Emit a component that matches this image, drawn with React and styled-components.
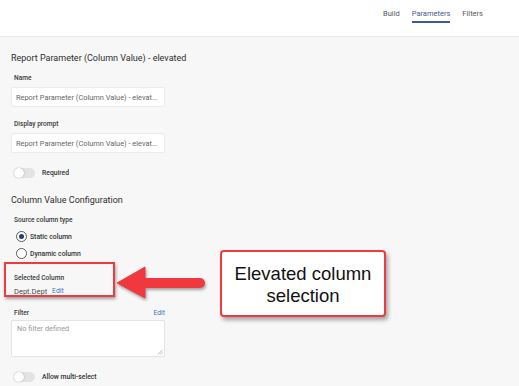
import React from "react";
import styled, { createGlobalStyle } from "styled-components";

const Global = createGlobalStyle`
  html, body { margin: 0; padding: 0; }
  body { font-family: Roboto, "Noto Sans", Arial, sans-serif; }
  * { box-sizing: border-box; }
`;

const Page = styled.div`
  position: relative;
  width: 519px;
  height: 386px;
  overflow: hidden;
  background: #f7f7f7;
`;

const Header = styled.header`
  height: 37px;
  background: #fff;
  border-bottom: 1px solid #e9e9e9;
  display: flex;
  justify-content: flex-end;
  align-items: flex-start;
  gap: 12px;
  padding: 9px 36px 0 0;
`;

const Tab = styled.div`
  font-size: 7.5px;
  line-height: 9px;
  color: ${(p) => (p.$active ? "#3d5b8c" : "#555")};
  padding-bottom: 3px;
  border-bottom: 2px solid ${(p) => (p.$active ? "#3d5b8c" : "transparent")};
`;

const Body = styled.main`
  padding: 0 11px;
  display: flex;
  flex-direction: column;
  align-items: flex-start;
`;

const Title = styled.div`
  font-size: 9px;
  line-height: 12px;
  color: #2e2e2e;
  margin-top: ${(p) => p.$mt}px;
`;

const Label = styled.div`
  font-size: 6.6px;
  line-height: 8px;
  font-weight: 500;
  color: #3a3a3a;
  padding-left: 3px;
  margin-top: ${(p) => p.$mt || 0}px;
`;

const Input = styled.div`
  width: 154px;
  height: 20px;
  margin-top: 5px;
  background: #fff;
  border: 1px solid #ececec;
  border-radius: 2px;
  display: flex;
  align-items: center;
  padding-left: 4px;
  font-size: 7.4px;
  color: #666;
  white-space: nowrap;
`;

const ToggleRow = styled.div`
  display: flex;
  align-items: center;
  gap: 7px;
  padding-left: 3px;
  margin-top: ${(p) => p.$mt}px;
`;

const Toggle = styled.div`
  position: relative;
  width: 21px;
  height: 10px;
  border-radius: 5px;
  background: #e3e3e3;
  &::after {
    content: "";
    position: absolute;
    left: 0;
    top: 0;
    width: 10px;
    height: 10px;
    border-radius: 50%;
    background: #fff;
    box-shadow: 0 0 1.5px rgba(0, 0, 0, 0.35);
  }
`;

const SmallText = styled.span`
  font-size: 6.8px;
  line-height: 8px;
  font-weight: 500;
  color: #333;
`;

const RadioGroup = styled.div`
  display: flex;
  flex-direction: column;
  gap: 6px;
  margin-top: 7px;
  padding-left: 5px;
`;

const RadioRow = styled.div`
  display: flex;
  align-items: center;
  gap: 3px;
`;

const Radio = styled.div`
  width: 11px;
  height: 11px;
  border-radius: 50%;
  border: 1px solid #5a5a5a;
  background: #fff;
  display: flex;
  align-items: center;
  justify-content: center;
  &::after {
    content: "";
    width: 5px;
    height: 5px;
    border-radius: 50%;
    background: ${(p) => (p.$checked ? "#1e3f70" : "transparent")};
  }
`;

const SelectedSection = styled.div`
  position: relative;
  margin-top: 15px;
  display: flex;
  flex-direction: column;
  gap: 5px;
`;

const Highlight = styled.div`
  position: absolute;
  left: -7px;
  top: -12px;
  width: 111px;
  height: 35px;
  border: 2.5px solid #ec3c40;
  box-shadow: 1px 2px 3px rgba(0, 0, 0, 0.35);
  pointer-events: none;
`;

const ValueRow = styled.div`
  display: flex;
  align-items: center;
  gap: 5px;
  padding-left: 3px;
  font-size: 7.5px;
  line-height: 9px;
  color: #4a4a4a;
`;

const EditLink = styled.span`
  font-size: 6.8px;
  color: #3a79b8;
`;

const FilterHeader = styled.div`
  width: 154px;
  display: flex;
  justify-content: space-between;
  align-items: center;
  margin-top: 13px;
`;

const TextArea = styled.div`
  position: relative;
  width: 154px;
  height: 37px;
  margin-top: 3px;
  background: #fff;
  border: 1px solid #e4e4e4;
  border-radius: 2px;
  padding: 3px 5px;
  font-size: 7.4px;
  line-height: 9px;
  color: #9a9a9a;
`;

const Grip = styled.svg`
  position: absolute;
  right: 1px;
  bottom: 1px;
`;

const Callout = styled.div`
  position: absolute;
  left: 220px;
  top: 250px;
  width: 166px;
  height: 67px;
  background: #fff;
  border: 2px solid #ec3c40;
  border-radius: 4px;
  box-shadow: 2px 3px 4px rgba(0, 0, 0, 0.35);
  display: flex;
  align-items: center;
  justify-content: center;
  text-align: center;
  font-family: "Liberation Sans", Arial, sans-serif;
  font-size: 18.5px;
  line-height: 22px;
  color: #111;
  padding-top: 2px;
`;

const ArrowSvg = styled.svg`
  position: absolute;
  left: 110px;
  top: 260px;
  overflow: visible;
  filter: drop-shadow(1px 2px 1.5px rgba(0, 0, 0, 0.35));
`;

export default function App() {
  return (
    <Page>
      <Global />
      <Header>
        <Tab>Build</Tab>
        <Tab $active>Parameters</Tab>
        <Tab>Filters</Tab>
      </Header>
      <Body>
        <Title $mt={15}>Report Parameter (Column Value) - elevated</Title>
        <Label $mt={10}>Name</Label>
        <Input>Report Parameter (Column Value) - elevat...</Input>
        <Label $mt={13}>Display prompt</Label>
        <Input>Report Parameter (Column Value) - elevat...</Input>
        <ToggleRow $mt={15}>
          <Toggle />
          <SmallText>Required</SmallText>
        </ToggleRow>
        <Title $mt={16}>Column Value Configuration</Title>
        <Label $mt={10}>Source column type</Label>
        <RadioGroup>
          <RadioRow>
            <Radio $checked />
            <SmallText>Static column</SmallText>
          </RadioRow>
          <RadioRow>
            <Radio />
            <SmallText>Dynamic column</SmallText>
          </RadioRow>
        </RadioGroup>
        <SelectedSection>
          <Highlight />
          <Label>Selected Column</Label>
          <ValueRow>
            Dept.Dept <EditLink>Edit</EditLink>
          </ValueRow>
        </SelectedSection>
        <FilterHeader>
          <Label>Filter</Label>
          <EditLink>Edit</EditLink>
        </FilterHeader>
        <TextArea>
          No filter defined
          <Grip width="6" height="6" viewBox="0 0 6 6">
            <path d="M5.5 1 L1 5.5 M5.5 3.5 L3.5 5.5" stroke="#999" strokeWidth="0.7" />
          </Grip>
        </TextArea>
        <ToggleRow $mt={15}>
          <Toggle />
          <SmallText>Allow multi-select</SmallText>
        </ToggleRow>
      </Body>
      <ArrowSvg width="100" height="40" viewBox="0 0 100 40">
        <path d="M7 23 L35 7 L35 38 Z" fill="#f0383f" stroke="#f0383f" strokeWidth="1" strokeLinejoin="round" />
        <line x1="33" y1="23" x2="90" y2="23" stroke="#f0383f" strokeWidth="10" strokeLinecap="round" />
      </ArrowSvg>
      <Callout>
        Elevated column
        <br />
        selection
      </Callout>
    </Page>
  );
}
